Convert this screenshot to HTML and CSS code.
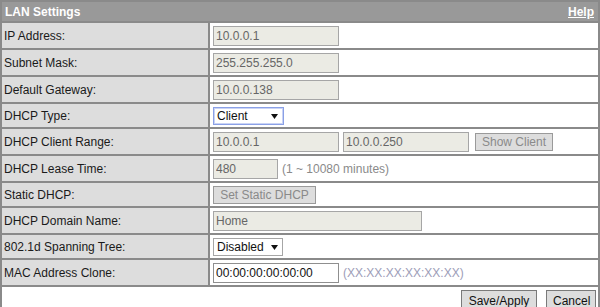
FILE: index.html
```html
<!DOCTYPE html>
<html>
<head>
<meta charset="utf-8">
<title>LAN Settings</title>
<link rel="stylesheet" href="styles.css">
</head>
<body>
<table class="settings">
  <colgroup>
    <col class="col-label">
    <col class="col-value">
  </colgroup>
  <tr class="row-head">
    <td class="head" colspan="2">
      <div class="head-inner"><span class="title">LAN Settings</span><a class="help" href="#">Help</a></div>
    </td>
  </tr>
  <tr class="row-in">
    <td class="label">IP Address:</td>
    <td class="value"><input class="field dis w126" type="text" value="10.0.0.1" disabled></td>
  </tr>
  <tr class="row-in">
    <td class="label">Subnet Mask:</td>
    <td class="value"><input class="field dis w126" type="text" value="255.255.255.0" disabled></td>
  </tr>
  <tr class="row-in">
    <td class="label">Default Gateway:</td>
    <td class="value"><input class="field dis w126" type="text" value="10.0.0.138" disabled></td>
  </tr>
  <tr class="row-sel">
    <td class="label">DHCP Type:</td>
    <td class="value">
      <span class="sel-wrap">
        <select class="sel sel-focus w71"><option>Client</option><option>Server</option><option>Disabled</option></select>
        <svg class="arrow" width="7" height="5" viewBox="0 0 7 5"><polygon points="0,0 7,0 3.5,5" fill="#111"/></svg>
      </span>
    </td>
  </tr>
  <tr class="row-in">
    <td class="label">DHCP Client Range:</td>
    <td class="value">
      <div class="line">
        <input class="field dis w126" type="text" value="10.0.0.1" disabled>
        <input class="field dis w126" type="text" value="10.0.0.250" disabled>
        <button class="btn btn-dis show-client" disabled>Show Client</button>
      </div>
    </td>
  </tr>
  <tr class="row-in">
    <td class="label">DHCP Lease Time:</td>
    <td class="value">
      <div class="line">
        <input class="field dis w65" type="text" value="480" disabled>
        <span class="hint">(1 ~ 10080 minutes)</span>
      </div>
    </td>
  </tr>
  <tr class="row-sel">
    <td class="label">Static DHCP:</td>
    <td class="value"><button class="btn btn-dis static" disabled>Set Static DHCP</button></td>
  </tr>
  <tr class="row-in">
    <td class="label">DHCP Domain Name:</td>
    <td class="value"><input class="field dis w209" type="text" value="Home" disabled></td>
  </tr>
  <tr class="row-sel">
    <td class="label">802.1d Spanning Tree:</td>
    <td class="value">
      <span class="sel-wrap">
        <select class="sel w70"><option>Disabled</option><option>Enabled</option></select>
        <svg class="arrow arrow-b" width="7" height="5" viewBox="0 0 7 5"><polygon points="0,0 7,0 3.5,5" fill="#111"/></svg>
      </span>
    </td>
  </tr>
  <tr class="row-in">
    <td class="label">MAC Address Clone:</td>
    <td class="value">
      <div class="line">
        <input class="field en w126" type="text" value="00:00:00:00:00:00">
        <span class="hint hint-mac">(XX:XX:XX:XX:XX:XX)</span>
      </div>
    </td>
  </tr>
  <tr class="row-in">
    <td class="actions" colspan="2">
      <div class="action-bar">
        <button class="btn btn-act save">Save/Apply</button>
        <button class="btn btn-act cancel">Cancel</button>
      </div>
    </td>
  </tr>
</table>
</body>
</html>
```
FILE: styles.css
```css
html, body {
  margin: 0;
  padding: 0;
  background: #ffffff;
}

body {
  font-family: "Liberation Sans", Arial, sans-serif;
  font-size: 12px;
  color: #1a1a1a;
}

.settings {
  width: 600px;
  border: 1px solid #8a8a8a;
  border-spacing: 0;
  border-collapse: separate;
  table-layout: fixed;
}

.col-label { width: 208px; }

.settings td {
  border: 1px solid #8a8a8a;
  padding: 0;
  vertical-align: middle;
}

.row-head { height: 21px; }
.row-in { height: 27px; }
.row-sel { height: 25px; }

.head {
  background: #999999;
  color: #ffffff;
  font-weight: bold;
  padding: 0 4px 0 3px !important;
}

.head-inner {
  display: flex;
  justify-content: space-between;
  align-items: center;
}

.help {
  color: #ffffff;
  text-decoration: underline;
}

.label {
  background: #dddddd;
  padding-left: 2px !important;
  white-space: nowrap;
}

.value {
  padding-left: 3px !important;
  background: #ffffff;
}

.line {
  display: flex;
  align-items: center;
  gap: 4px;
}

.field {
  box-sizing: border-box;
  height: 20px;
  font: inherit;
  padding: 0 2px;
  margin: 0;
  border: 1px solid #a6a6a6;
  outline: none;
  display: block;
}

.dis {
  background: #ebebe4;
  color: #666666;
}

.en {
  background: #ffffff;
  color: #111111;
  border-color: #8f8f8f;
}

.w126 { width: 126px; }
.w65 { width: 65px; }
.w209 { width: 209px; }
.w71 { width: 71px; }
.w70 { width: 70px; }

.hint {
  color: #8a8a8a;
}

.hint-mac {
  color: #9d9db8;
}

.sel-wrap {
  position: relative;
  display: inline-block;
  vertical-align: middle;
}

.sel {
  appearance: none;
  -webkit-appearance: none;
  box-sizing: border-box;
  height: 18px;
  font: inherit;
  color: #111111;
  background: #ffffff;
  border: 1px solid #a6a6a6;
  border-radius: 0;
  padding: 0 0 0 3px;
  margin: 0;
  display: block;
  outline: none;
}

.sel-focus {
  border-color: #8aa0e6;
  box-shadow: inset 0 0 0 1px #c9d3f5;
}

.arrow {
  position: absolute;
  left: 58px;
  top: 7px;
  pointer-events: none;
}

.arrow-b {
  left: 58px;
}

.btn {
  box-sizing: border-box;
  font: inherit;
  margin: 0;
  padding: 0 6px;
  border-radius: 0;
  cursor: default;
  white-space: nowrap;
}

.btn-dis {
  height: 18px;
  background: #dddddd;
  color: #8a8a8a;
  border: 1px solid #9a9a9a;
}

.show-client {
  margin-left: 2px;
  width: 78px;
}

.static {
  width: 103px;
  display: block;
}

.actions {
  padding: 0 2px 0 0 !important;
  vertical-align: top !important;
}

.action-bar {
  display: flex;
  justify-content: flex-end;
  gap: 9px;
  padding-top: 3px;
}

.btn-act {
  height: 21px;
  background: #dddddd;
  color: #111111;
  border: 1px solid #7a7a7a;
}

.save { width: 76px; }
.cancel { width: 50px; }
```
